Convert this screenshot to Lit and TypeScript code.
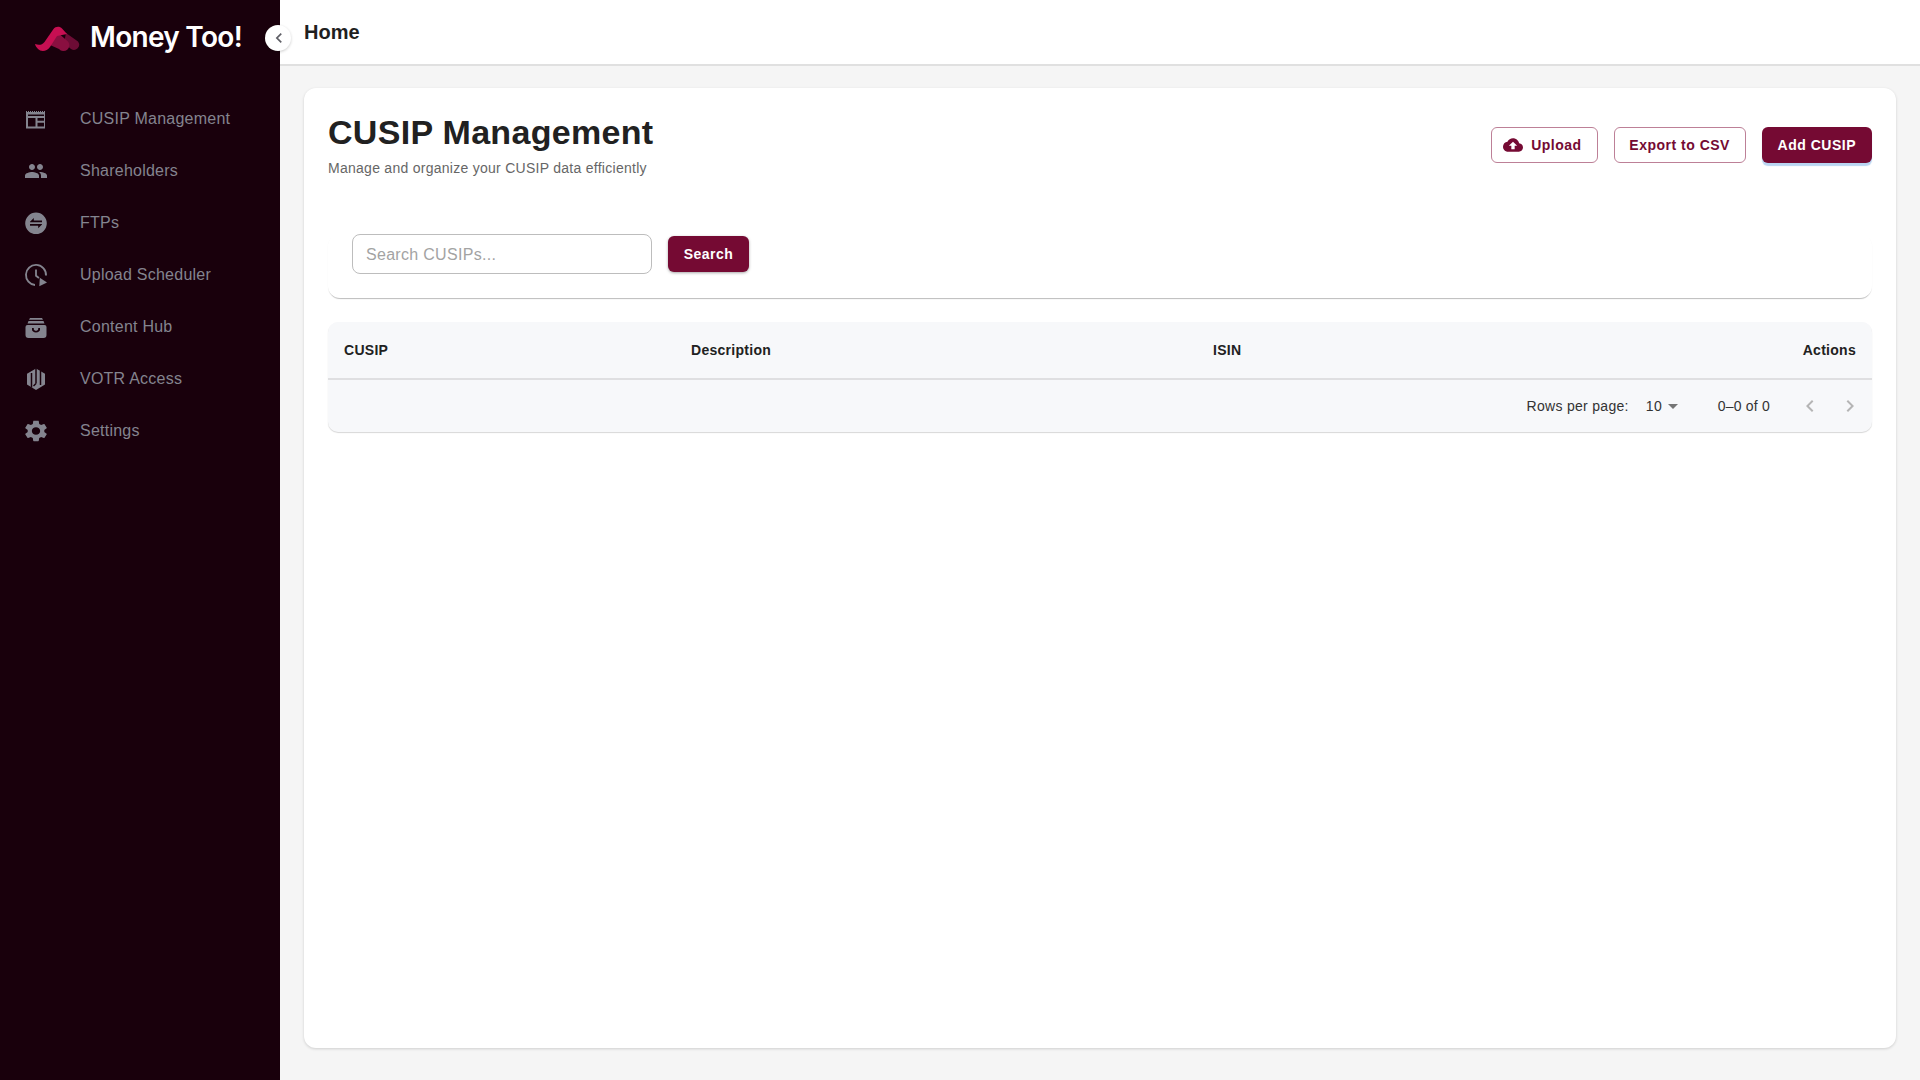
import { LitElement, html, css, svg } from "lit";
import { customElement } from "lit/decorators.js";

const BG = "#19000c";
const navItems = [
  { label: "CUSIP Management", icon: svg`<path fill-rule="evenodd" d="M2 5V4h1v1h1V4h1v1h1V4h1v1h1V4h1v1h1V4h1v1h1V4h1v1h1V4h1v1h1V4h1v1h1V4h1v1h1V4h1v1V21.500H2V5zm2 2.500v1.500h16V7.500H4zm0 3.500v8.500h7.500V11H4zm9.500 0v2.800H20V11h-6.500zm0 4.800v3.700H20v-3.700h-6.500z"/>` },
  { label: "Shareholders", icon: svg`<path d="M16 11c1.66 0 2.99-1.34 2.99-3S17.66 5 16 5c-1.66 0-3 1.34-3 3s1.34 3 3 3zm-8 0c1.66 0 2.99-1.34 2.99-3S9.66 5 8 5C6.34 5 5 6.34 5 8s1.34 3 3 3zm0 2c-2.33 0-7 1.17-7 3.5V19h14v-2.5c0-2.33-4.67-3.5-7-3.5zm8 0c-.29 0-.62.02-.97.05 1.16.84 1.97 1.97 1.97 3.45V19h6v-2.5c0-2.33-4.67-3.5-7-3.5z"/>` },
  { label: "FTPs", icon: svg`<path fill-rule="evenodd" d="M12 1.500a10.800 10.800 0 1 0 0 21.600 10.800 10.800 0 0 0 0-21.600zM6 10.800 9.800 7v2.500H18v1.800H6zm12 2.600L14.200 17.200v-2.500H6v-1.800h12z"/>` },
  { label: "Upload Scheduler", icon: svg`<path d="M12 1a11 11 0 0 0-1 21.950v-2A9.100 9.100 0 1 1 21.050 12.500h1.950A11 11 0 0 0 12 1z"/><path d="M11.100 6.500h1.800v5.800l2.600 2-1.100 1.400-3.300-2.500z"/><path d="M15.800 14.800 23 19.500 15.300 23.200z"/>` },
  { label: "Content Hub", icon: svg`<path fill-rule="evenodd" d="M6 3h12l1 1.800H5L6 3zM4.500 6h15l1 2.500h-17l1-2.500zM3.500 10h17a2 2 0 0 1 2 2v8a3 3 0 0 1-3 3h-15a3 3 0 0 1-3-3v-8a2 2 0 0 1 2-2zm4.500 3v1.500c0 1.600 1.600 3 4 3s4-1.400 4-3V13h-1.800v1.300c0 .8-1 1.500-2.200 1.500s-2.200-.7-2.200-1.500V13H8z"/>` },
  { label: "VOTR Access", icon: svg`<path d="M12 1.500 21 6.800V17.500L12 23 3 17.500V6.800z"/><path fill="none" stroke="${BG}" stroke-width="1.500" d="M7.500 6v14.500M12 1v15.500M16.500 4v14"/><path fill="none" stroke="${BG}" stroke-width="1.500" d="M12 16.500 9.500 19"/>` },
  { label: "Settings", icon: svg`<path transform="translate(12 12) scale(1.16 1.06) translate(-12 -12)" d="M19.14 12.94c.04-.3.06-.61.06-.94 0-.32-.02-.64-.07-.94l2.03-1.58c.18-.14.23-.41.12-.61l-1.92-3.32c-.12-.22-.37-.29-.59-.22l-2.39.96c-.5-.38-1.03-.7-1.62-.94l-.36-2.54c-.04-.24-.24-.41-.48-.41h-3.84c-.24 0-.43.17-.47.41l-.36 2.54c-.59.24-1.13.57-1.62.94l-2.39-.96c-.22-.08-.47 0-.59.22L2.74 8.87c-.12.21-.08.47.12.61l2.03 1.58c-.05.3-.09.63-.09.94s.02.64.07.94l-2.03 1.58c-.18.14-.23.41-.12.61l1.92 3.32c.12.22.37.29.59.22l2.39-.96c.5.38 1.03.7 1.62.94l.36 2.54c.05.24.24.41.48.41h3.84c.24 0 .44-.17.47-.41l.36-2.54c.59-.24 1.13-.56 1.62-.94l2.39.96c.22.08.47 0 .59-.22l1.92-3.32c.12-.22.07-.47-.12-.61l-2.01-1.58zM12 15.6c-1.98 0-3.6-1.62-3.6-3.6s1.62-3.6 3.6-3.6 3.6 1.62 3.6 3.6-1.62 3.6-3.6 3.6z"/>` },
];

@customElement("app-root")
export class AppRoot extends LitElement {
  static styles = css`
    :host { display: block; width: 1920px; height: 1080px; overflow: hidden; font-family: "Liberation Sans", Arial, sans-serif; background: #f5f5f5; }
    * { box-sizing: border-box; }
    .layout { display: flex; height: 1080px; }
    .sidebar { width: 280px; flex: none; background: #19000c; position: relative; }
    .brand { height: 72px; padding: 2px 0 0 35px; display: flex; align-items: center; gap: 10px; }
    .brand svg { width: 45px; height: 26px; flex: none; margin-top: 3px; }
    .brand-name { font-family: Inter, sans-serif; font-weight: 600; font-size: 28px; letter-spacing: -0.7px; color: #fff; white-space: nowrap; }
    .toggle { position: absolute; left: 265px; top: 25px; width: 26px; height: 26px; border-radius: 50%; background: #fff; box-shadow: 0 1px 3px rgba(0,0,0,.2); display: flex; align-items: center; justify-content: center; z-index: 2; }
    .toggle svg { width: 20px; height: 20px; fill: #5f5f66; margin-left: 1px; }
    .nav { display: flex; flex-direction: column; padding-top: 21px; }
    .nav-item { height: 52px; display: flex; align-items: center; padding-left: 24px; gap: 32px; color: #84848f; font-size: 16px; letter-spacing: 0.24px; }
    .nav-item svg { width: 24px; height: 24px; fill: #84848f; flex: none; }
    .main { flex: 1; min-width: 0; display: flex; flex-direction: column; }
    .appbar { height: 66px; flex: none; background: #fff; border-bottom: 2px solid #e0e0e0; padding: 1px 24px 0; display: flex; align-items: center; font-size: 20px; font-weight: 700; color: #1f1f1f; }
    .content { flex: 1; padding: 22px 24px 32px; }
    .card { height: 960px; background: #fff; border-radius: 12px; box-shadow: 0 1px 3px rgba(0,0,0,.16); padding: 24px; }
    .head { display: flex; justify-content: space-between; align-items: flex-start; }
    h1 { margin: -1px 0 0; font-size: 34px; line-height: 42px; font-weight: 700; color: #212121; letter-spacing: 0.3px; }
    .sub { margin-top: 5px; font-size: 14px; line-height: 20px; color: #666; letter-spacing: 0.27px; }
    .actions { display: flex; gap: 16px; padding-top: 15px; }
    .btn { height: 36px; border-radius: 6px; padding: 0 15px; display: flex; align-items: center; justify-content: center; gap: 8px; font: 700 14px "Liberation Sans", sans-serif; letter-spacing: 0.5px; color: #750a33; background: #fff; border: 1px solid #bd8097; }
    .btn svg { width: 20px; height: 20px; fill: #750a33; margin-left: -4px; }
    .btn.export { width: 132px; padding: 0; }
    .btn.primary { background: #750a33; color: #fff; border: 0; padding: 0 16px; box-shadow: 0 3px 1px #b9d5f2; }
    .search-box { margin-top: 56px; height: 64px; padding: 0 24px; display: flex; align-items: flex-start; gap: 16px; border-radius: 12px; box-shadow: 0 2px 1px -1px rgba(0,0,0,.2), 0 1px 1px rgba(0,0,0,.08); }
    .input { width: 300px; height: 40px; border: 1px solid #bdbdbd; border-radius: 8px; padding: 1px 13px 0; display: flex; align-items: center; font-size: 16px; letter-spacing: .3px; color: #a3a3a3; }
    .btn.primary.search { height: 36px; margin-top: 2px; padding: 0; width: 81px; border-radius: 6px; box-shadow: 0 1px 3px rgba(0,0,0,.35); }
    .table { margin-top: 24px; border-radius: 10px; background: #f7f8fa; box-shadow: 0 1px 1px rgba(0,0,0,.16); }
    .row { height: 58px; display: grid; grid-template-columns: 347px 522px 1fr auto; align-items: center; padding: 0 16px 1px; border-bottom: 2px solid #dfdfe1; font-size: 14px; font-weight: 700; color: #212121; letter-spacing: 0.28px; }
    .pager { height: 52px; display: flex; justify-content: flex-end; align-items: center; padding-right: 10px; font-size: 14px; color: #333; letter-spacing: .3px; }
    .rows { margin-right: 17px; }
    .sel { display: flex; align-items: center; width: 50px; margin-right: 22px; margin-top: -1px; }
    .sel svg { width: 24px; height: 24px; fill: #757575; margin-left: -1px; }
    .count { margin-right: 28px; letter-spacing: .2px; }
    .pg { width: 24px; height: 24px; fill: #b5b5b5; margin-left: 16px; }
    .pg.first { margin-left: 0; }
  `;

  render() {
    return html`
      <div class="layout">
        <aside class="sidebar">
          <div class="brand">
            <svg viewBox="0 0 45 26">
              <path fill="#6d0c35" d="M31 7 43 15.500a5.200 5.200 0 0 1-7 7.500l-7-6z"/>
              <path fill="#8a0f40" d="M22 6 33 15.500a5.500 5.500 0 0 1-9 7.500L15 19z"/>
              <path fill="#c70f52" d="M0 18C4 19.500 7 19 9.500 16L18.500 3C20.500 0 25 0 27 2.500L32 8 22 10 15 21C12 25.500 6 26 3 23 1.500 21.500.5 20 0 18z"/>
            </svg>
            <span class="brand-name">Money Too!</span>
          </div>
          <div class="toggle"><svg viewBox="0 0 24 24"><path d="M15.41 7.41 14 6l-6 6 6 6 1.41-1.41L10.83 12z"/></svg></div>
          <nav class="nav">
            ${navItems.map(i => html`<div class="nav-item"><svg viewBox="0 0 24 24">${i.icon}</svg><span>${i.label}</span></div>`)}
          </nav>
        </aside>
        <div class="main">
          <header class="appbar">Home</header>
          <div class="content">
            <section class="card">
              <div class="head">
                <div>
                  <h1>CUSIP Management</h1>
                  <div class="sub">Manage and organize your CUSIP data efficiently</div>
                </div>
                <div class="actions">
                  <div class="btn"><svg viewBox="0 0 24 24"><path d="M19.35 10.04C18.67 6.59 15.64 4 12 4 9.11 4 6.6 5.64 5.35 8.04 2.34 8.36 0 10.91 0 14c0 3.31 2.69 6 6 6h13c2.76 0 5-2.24 5-5 0-2.64-2.05-4.78-4.65-4.96zM14 13v4h-4v-4H7l5-5 5 5h-3z"/></svg>Upload</div>
                  <div class="btn export">Export to CSV</div>
                  <div class="btn primary">Add CUSIP</div>
                </div>
              </div>
              <div class="search-box">
                <div class="input">Search CUSIPs...</div>
                <div class="btn primary search">Search</div>
              </div>
              <div class="table">
                <div class="row"><span>CUSIP</span><span>Description</span><span>ISIN</span><span>Actions</span></div>
                <div class="pager">
                  <span class="rows">Rows per page:</span>
                  <span class="sel">10<svg viewBox="0 0 24 24"><path d="M7 10l5 5 5-5z"/></svg></span>
                  <span class="count">0–0 of 0</span>
                  <svg class="pg first" viewBox="0 0 24 24"><path d="M15.41 7.41 14 6l-6 6 6 6 1.41-1.41L10.83 12z"/></svg>
                  <svg class="pg" viewBox="0 0 24 24"><path d="M10 6 8.59 7.41 13.17 12l-4.58 4.59L10 18l6-6z"/></svg>
                </div>
              </div>
            </section>
          </div>
        </div>
      </div>
    `;
  }
}
